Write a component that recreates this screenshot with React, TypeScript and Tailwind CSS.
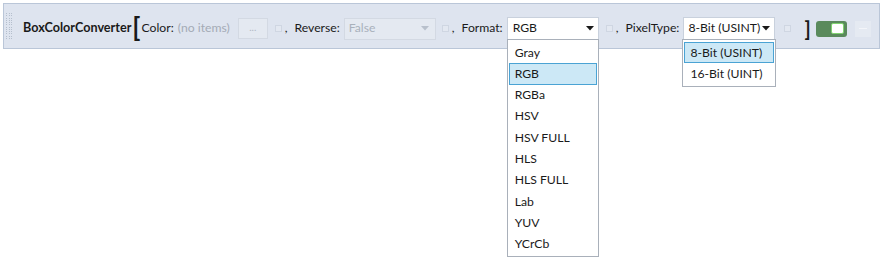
import { useState } from "react";

const formats = ["Gray", "RGB", "RGBa", "HSV", "HSV FULL", "HLS", "HLS FULL", "Lab", "YUV", "YCrCb"];
const pixelTypes = ["8-Bit (USINT)", "16-Bit (UINT)"];

const Arrow = ({ light }: { light?: boolean }) => (
  <svg width="8" height="5" viewBox="0 0 8 5" className="shrink-0">
    <path d="M0 0 L8 0 L4 4.5 Z" fill={light ? "#b8c0cc" : "#1a1a1a"} />
  </svg>
);

const Tick = () => (
  <div className="w-[7px] h-[7px] border border-[#cfd6e2] bg-[#e3e8f1] shrink-0" />
);

const Comma = () => <span className="text-[#1a1a1a] ml-[3px] mr-[7px]">,</span>;

const App = () => {
  const [format, setFormat] = useState("RGB");
  const [pixelType, setPixelType] = useState("8-Bit (USINT)");
  const [enabled, setEnabled] = useState(true);

  return (
    <div
      className="relative w-[886px] h-[261px] bg-white text-[12.2px] text-[#1a1a1a] whitespace-nowrap"
      style={{ fontFamily: 'Lato, "Noto Sans", sans-serif' }}
    >
      <div className="pt-[3px] px-[3px]">
        <div className="flex items-center h-[46px] w-[877px] pt-[5px] bg-[#dee4ef] border border-[#bac6d8] [&>*]:shrink-0">
          {/* grip */}
          <div className="ml-[2px] -mt-[5px] w-[7px] h-[26px] grid grid-cols-3 gap-[1px] content-between">
            {Array.from({ length: 36 }).map((_, i) => (
              <div key={i} className="w-[1px] h-[1px] bg-[#b5bfcd]" />
            ))}
          </div>

          <span className="ml-[10px] font-bold text-[12.6px]">BoxColorConverter</span>
          <span className="font-bold text-[26px] leading-none -mt-[4px] ml-[1px] mr-[1px]">[</span>

          <span>Color:</span>
          <span className="ml-[4px] text-[#a4abb6]">(no items)</span>
          <div className="ml-[8px] w-[30px] h-[21px] border border-[#d3d9e3] bg-[#e4e9f1] flex items-center justify-center text-[10px] text-[#b0b7c2] leading-none pb-[4px]">
            ...
          </div>
          <div className="ml-[7px]">
            <Tick />
          </div>
          <Comma />

          <span>Reverse:</span>
          <div className="ml-[4px] w-[92px] h-[22px] border border-[#d3d9e3] bg-[#e4e9f1] flex items-center justify-between pl-[4px] pr-[6px] text-[#a9b1bc]">
            <span>False</span>
            <Arrow light />
          </div>
          <div className="ml-[6px]">
            <Tick />
          </div>
          <Comma />

          <span>Format:</span>
          <div className="relative ml-[4px]">
            <div className="w-[92px] h-[23px] border border-[#c9d1dd] bg-white flex items-center justify-between pl-[5px] pr-[4px]">
              <span>{format}</span>
              <Arrow />
            </div>
            <div className="absolute left-0 top-[22px] w-[92px] border border-[#a9b0ba] bg-white pt-[2px] pb-[1px] z-10">
              {formats.map((f) => (
                <div
                  key={f}
                  onClick={() => setFormat(f)}
                  className={`h-[21.3px] flex items-center px-[5px] mx-[1px] ${
                    f === format ? "bg-[#cce8f6] border border-[#4aa3d4]" : "border border-transparent"
                  }`}
                >
                  {f}
                </div>
              ))}
            </div>
          </div>
          <div className="ml-[7px]">
            <Tick />
          </div>
          <Comma />

          <span>PixelType:</span>
          <div className="relative ml-[4px]">
            <div className="w-[92px] h-[23px] border border-[#c9d1dd] bg-white flex items-center justify-between pl-[4px] pr-[4px]">
              <span>{pixelType}</span>
              <Arrow />
            </div>
            <div className="absolute -left-[1px] top-[22px] w-[94px] border border-[#a9b0ba] bg-white pt-[2px] pb-[1px] z-10">
              {pixelTypes.map((p) => (
                <div
                  key={p}
                  onClick={() => setPixelType(p)}
                  className={`h-[21.3px] flex items-center px-[5px] mx-[1px] ${
                    p === pixelType ? "bg-[#cce8f6] border border-[#4aa3d4]" : "border border-transparent"
                  }`}
                >
                  {p}
                </div>
              ))}
            </div>
          </div>
          <div className="ml-[9px]">
            <Tick />
          </div>

          <span className="ml-[13px] font-bold text-[20px] leading-none -mt-[2px]">]</span>
          <button
            onClick={() => setEnabled(!enabled)}
            className={`ml-[5px] w-[31px] h-[16px] rounded-[3px] flex items-center px-[3px] ${
              enabled ? "bg-[#5a8a5c] justify-end" : "bg-[#b9c2cf] justify-start"
            }`}
          >
            <div className="w-[13px] h-[11px] rounded-[2px] bg-white border border-[#7fd36f]" />
          </button>
          <div className="ml-[8px] w-[16px] h-[16px] bg-[#e5eaf2] flex items-center justify-center">
            <div className="w-[8px] h-[1px] bg-[#f3f5f9]" />
          </div>
        </div>
      </div>
    </div>
  );
};

export default App;
